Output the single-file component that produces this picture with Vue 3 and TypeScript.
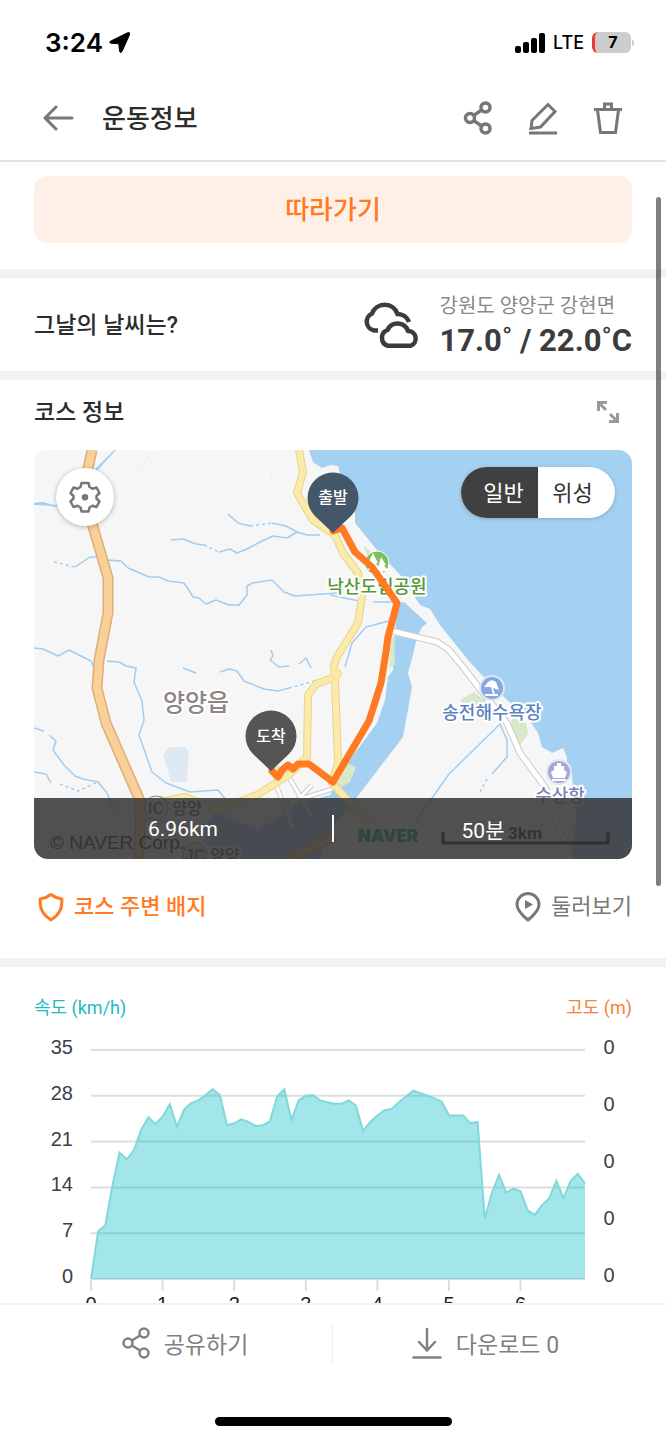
<script setup lang="ts">
import { ref } from 'vue'

const mapMode = ref<'normal' | 'satellite'>('normal')

const speeds: number[] = [
  0, 7.3, 8.2, 14.3, 19.3, 18.3, 19.7, 22.8, 24.7, 23.7,
  24.8, 26.7, 23.3, 25.9, 26.9, 27.3, 28.1, 29, 28.1, 23.5,
  23.8, 24.4, 24, 23.4, 23.5, 24.1, 27.9, 29, 24.3, 27.3,
  28, 28.1, 27.3, 27, 26.8, 26.8, 27.3, 26.5, 22.6, 24,
  25, 25.8, 26, 27, 27.9, 28.8, 28.4, 28, 27.6, 27.1,
  25, 25, 25, 23.8, 24, 9.2, 13.2, 15.9, 13.2, 13.8,
  13.4, 10.5, 9.8, 11.3, 12.3, 15, 12.4, 15, 16.1, 14.6,
]

const chart = { left: 57, right: 551, top: 22, bottom: 251 }
const perKm = (chart.right - chart.left) / 6.9
const xOf = (km: number): number => chart.left + km * perKm
const yOf = (v: number): number => chart.bottom - (v / 35) * (chart.bottom - chart.top)

const line = speeds.map((v, i) => `${xOf(i / 10).toFixed(1)},${yOf(v).toFixed(1)}`).join(' ')
const area = `${chart.left},${chart.bottom} ${line} ${chart.right},${chart.bottom}`
const speedTicks = [35, 28, 21, 14, 7, 0]
const altitudeTicks = [0, 1, 2, 3, 4]
const kmTicks = [0, 1, 2, 3, 4, 5, 6]
</script>

<template>
  <div class="app">
    <div class="status">
      <span class="time">3:24</span>
      <svg class="loc" width="22" height="22" viewBox="0 0 22 22" aria-hidden="true">
        <path d="M1.5 9.2 18.5 .8Q21.5 0 20.6 2.6L13 19.5Q11.5 21.8 10.6 19.2L9.8 11.8 2 11.2Q-.5 10.5 1.5 9.2Z" fill="#000" stroke="#000" stroke-width="1" stroke-linejoin="round" />
      </svg>
      <svg class="signal" width="30" height="20" viewBox="0 0 30 20" aria-hidden="true">
        <rect x="0" y="13" width="6" height="7" rx="2" />
        <rect x="8" y="9" width="6" height="11" rx="2" />
        <rect x="16" y="5" width="6" height="15" rx="2" />
        <rect x="24" y="0" width="6" height="20" rx="2" />
      </svg>
      <span class="net">LTE</span>
      <span class="battery">7</span>
      <i class="cap"></i>
    </div>

    <header class="header">
      <button class="icon-btn" aria-label="뒤로">
        <svg width="32" height="26" viewBox="0 0 32 26" fill="none" stroke="#777" stroke-width="3" stroke-linecap="round" stroke-linejoin="round">
          <path d="M30 13H3M14 2 3 13 14 24" />
        </svg>
      </button>
      <h1>운동정보</h1>
      <div class="actions">
        <button class="icon-btn" aria-label="공유">
          <svg width="30" height="34" viewBox="0 0 30 34" fill="none" stroke="#777" stroke-width="3.5">
            <circle cx="22.5" cy="6.5" r="4.5" /><circle cx="7" cy="17" r="4.5" /><circle cx="22.5" cy="27.5" r="4.5" />
            <path d="M10.8 14.4 18.7 9M10.8 19.6 18.7 25" />
          </svg>
        </button>
        <button class="icon-btn" aria-label="수정">
          <svg width="30" height="34" viewBox="0 0 30 34" fill="none" stroke="#777" stroke-width="3">
            <path d="M4 19.5 20 3.5 27 10.5 12.5 26 3 27.5ZM1 32H29" />
          </svg>
        </button>
        <button class="icon-btn" aria-label="삭제">
          <svg width="30" height="34" viewBox="0 0 30 34" fill="none" stroke="#777" stroke-width="3">
            <path d="M1 8.5H29M4.5 9 7.5 31.5H22.5L25.5 9M11.5 8V3H18.5V8" />
          </svg>
        </button>
      </div>
    </header>

    <main class="scroll">
      <section class="follow">
        <button class="follow-btn">따라가기</button>
      </section>

      <section class="weather">
        <h2>그날의 날씨는?</h2>
        <svg width="60" height="50" viewBox="0 0 60 50" fill="none" stroke="#3c3c3c" stroke-width="4.5" aria-hidden="true">
          <path d="M17 30.5H13A9 9 0 0 1 11 13.5 13.5 13.5 0 0 1 36.5 14 12 12 0 0 1 48 22" />
          <path d="M27 45.8A8.3 8.3 0 0 1 26.5 30 11 11 0 0 1 47 31 7.6 7.6 0 0 1 49.500 45.8Z" stroke-linejoin="round" />
        </svg>
        <div class="weather-text">
          <p class="place">강원도 양양군 강현면</p>
          <p class="temp">17.0˚ / 22.0˚C</p>
        </div>
      </section>

      <section class="course">
        <div class="course-head">
          <h2>코스 정보</h2>
          <button class="icon-btn" aria-label="지도 확대">
            <svg width="24" height="24" viewBox="0 0 24 24" fill="none" stroke="#999" stroke-width="3">
              <path d="M11 2.5H2.5V11M2.5 2.5 10 10M13 21.5H21.5V13M21.5 21.5 14 14" />
            </svg>
          </button>
        </div>

        <div class="map">
          <svg class="map-canvas" viewBox="0 0 598 409" role="img" aria-label="코스 지도">
            <rect width="598" height="409" fill="#f6f6f6" />
            <g transform="translate(-34 -450)" fill="none" stroke-linejoin="round">
              <path fill="#a4d1f2" d="M309 450 313 462 322 468 330 465 338 466 340 474 355 512 355 523 377 550 402 577 420 605 430 609 440 625 468 660 480 673 507 700 527 717 538 733 542 747 552 753 563 748 567 757 566 767 572 773 573 798 577 817 572 847 572 859H632V450Z" />
              <path fill="#a4d1f2" d="M404 602 427 623 422 627 417 637 413 655 408 673 412 687 403 737 357 797 334 825 320 859H240L205 845 208 820 217 812 258 830 300 803 330 795 352 757 377 723 385 700 388 677 393 670V657L396 620 398 603Z" />
              <path fill="#a4d1f2" d="M34 503 42 502 58 506 34 505ZM95 469 115 450 98 470Z" />
              <g stroke="#9fcdf3" stroke-width="1.5">
                <path d="M34 504 44 503 53 506 60 505M96 470 115 450M75 567 90 557 97 557M107 560 121 561 128 568 149 577 159 577 168 581 184 583 190 592 193 597 199 598 206 604 216 600 229 605 239 605 247 595V586L252 583 272 580 284 592 295 596 337 593M171 540 183 539 196 544 204 545M219 552 230 549 237 553 247 549 260 542 273 536 287 538 297 532 286 526 272 523M228 514 238 523 250 526M297 532 307 535 320 535M34 648 43 649 58 656 69 650 91 661 95 670M107 661 119 662 126 666 136 668 134 682 142 701 144 720 139 735 152 772 166 783 190 792 218 790 228 802" />
                <path d="M34 728 44 731M49 735 56 741 53 750 64 765 75 776 83 779 98 782 107 793 116 813M34 772 46 774 51 783M183 668 196 673M220 672 229 669 237 671 244 681 264 689 278 691 289 688M271 650 273 656 270 660 279 667 289 666M299 664 306 658 311 668M373 602 398 602M330 595 364 602M389 621 366 627 352 643 345 667M500 724 449 774 418 818 400 848M500 724 507 740V757L492 774" />
                <path d="M54 562 75 567M60 784 78 791 98 782M289 688 318 680M204 545 219 552M250 526 272 523M487 779 480 792" stroke-dasharray="3 3" />
              </g>
              <g stroke="#ccc" stroke-dasharray="1 5"><path d="M129 482 153 451M271 475 284 469" /></g>
              <path fill="#dfe9f2" d="M169 747 185 747 189 752 187 782H171L163 755Z" />
              <path fill="#d8e8c9" d="M460 700 474 692 484 700 492 705V715H472ZM513 718 526 723 528 734 520 745 510 726ZM344 762 356 767 350 782 338 789 330 785ZM363 545 377 557 370 563ZM270 768 279 765 282 778 275 784ZM389 668 395 665 394 636 391 638Z" />

              <path d="M276 784 292 827M290 779 313 818M312 785 290 808M282 805 332 789" stroke="#ccc" stroke-width="5" />
              <path d="M276 784 292 827M290 779 313 818M312 785 290 808M282 805 332 789" stroke="#fff" stroke-width="3" />
              <path d="M299 450 303 472 297 493 313 520 335 535 343 553 358 573 362 597 358 623 337 657 334 665 335 680 338 763 332 783 390 847M335 677 316 684 308 695 307 757 290 774 257 795 217 810 185 797 165 801 145 810" stroke="#e8d38c" stroke-width="8" />
              <path d="M299 450 303 472 297 493 313 520 335 535 343 553 358 573 362 597 358 623 337 657 334 665 335 680 338 763 332 783 390 847M335 677 316 684 308 695 307 757 290 774 257 795 217 810 185 797 165 801 145 810" stroke="#fceaab" stroke-width="6" />
              <circle cx="336" cy="674" r="5" stroke="#f8e3a0" stroke-width="3" fill="#fceaab" />
              <path d="M92 450 87 473 92 523 108 578V613L99 660 97 688 106 723 141 803 139 859M141 820 165 800M290 859 335 835" stroke="#e0ad76" stroke-width="11" />
              <path d="M92 450 87 473 92 523 108 578V613L99 660 97 688 106 723 141 803 139 859M141 820 165 800M290 859 335 835" stroke="#f9d198" stroke-width="8" />
              <path d="M392 631 437 642 448 649 463 667 483 693 507 723 520 753 545 787 571 859" stroke="#ccc" stroke-width="7" />
              <path d="M392 631 437 642 448 649 463 667 483 693 507 723 520 753 545 787 571 859" stroke="#fff" stroke-width="5" />

              <circle cx="377" cy="563" r="12" fill="#7bbf5c" stroke="#fff" stroke-width="1" />
              <path fill="#fff" d="M373 553 378 563H376L380 570H375V574H372V570H367L371 563H368ZM381 557 386 565H384L388 571H383V575H380V571H377Z" />
              <circle cx="492" cy="688" r="12" fill="#86a8dc" stroke="#dce8f8" stroke-width="2" />
              <path fill="#fff" d="M484 687 488 682 492 680 496 682 499 690 493 688 495 694H498V696H485V694H493L491 687Z" />
              <circle cx="559" cy="772" r="12" fill="#a3a9d3" stroke="#e4e6f5" stroke-width="2" />
              <path fill="#fff" d="M557 763H561V766H564V770L567 772 565 778H553L551 772 554 770V766H557ZM552 779H566V781H552Z" />

              <g class="map-text" text-anchor="middle" stroke="#fff" stroke-width="4" paint-order="stroke">
                <text x="377" y="593" font-size="18" fill="#509a37">낙산도립공원</text>
                <text x="492" y="719" font-size="18" fill="#5f83bd">송전해수욕장</text>
                <text x="560" y="802" font-size="18" fill="#7c81b5">수산항</text>
                <text x="196" y="711" font-size="24" fill="#8c8583">양양읍</text>
                <text x="187" y="814" font-size="16" fill="#444">양양</text>
                <text x="225" y="861" font-size="16" fill="#444">양양</text>
              </g>
              <g class="map-latin">
                <rect x="144" y="796" width="24" height="24" rx="12" fill="#eee" stroke="#888" />
                <text x="156" y="814" font-size="16" text-anchor="middle" fill="#666">IC</text>
                <rect x="183" y="843" width="24" height="24" rx="12" fill="#eee" stroke="#888" />
                <text x="195" y="861" font-size="16" text-anchor="middle" fill="#666">JC</text>
                <text class="plain" x="50" y="849" font-size="19" fill="#111">© NAVER Corp.</text>
                <rect x="350" y="824" width="76" height="26" rx="10" fill="#fff" />
                <text class="heavy" x="388" y="842" font-size="17" text-anchor="middle" fill="#03a850">NAVER</text>
                <text x="525" y="839" font-size="17" text-anchor="middle" fill="#111">3km</text>
                <path d="M443 832V843H608V832" stroke="#000" stroke-width="3" stroke-linejoin="miter" />
              </g>

              <path d="M333 531 342 528 355 552 372 567 397 603 388 637 386 652 381 683 369 721 333 782 309 764H298L293 769 288 765 282 770 278 777 272 771" stroke="#ff7a22" stroke-width="7" stroke-linecap="round" />
              <g class="pin" text-anchor="middle">
                <path fill="#43566a" d="M333 533 315 516A25.5 25.5 0 1 1 351 516Z" />
                <text x="333" y="503" font-size="16" fill="#fff">출발</text>
                <path fill="#555" d="M271 771 253 754A25.5 25.5 0 1 1 289 754Z" />
                <text x="271" y="742" font-size="16" fill="#fff">도착</text>
              </g>
            </g>
          </svg>

          <button class="gear" aria-label="지도 설정">
            <svg width="32" height="32" viewBox="0 0 32 32" fill="none" stroke="#777" stroke-width="2.5" stroke-linejoin="round">
              <path d="M12.5 2H19.5L20.5 6 23.5 7.8 27.5 6.5 30.5 12 27.5 15V17.5L30.5 20.5 27.5 26 23.5 24.7 20.5 26.5 19.5 30.5H12.5L11.5 26.5 8.5 24.7 4.5 26 1.5 20.5 4.5 17.5V15L1.5 12 4.5 6.5 8.5 7.8 11.5 6Z" />
              <circle cx="16" cy="16.2" r="2" fill="#777" />
            </svg>
          </button>

          <div class="toggle">
            <button :class="{ on: mapMode === 'normal' }" @click="mapMode = 'normal'">일반</button>
            <button :class="{ on: mapMode === 'satellite' }" @click="mapMode = 'satellite'">위성</button>
          </div>

          <div class="stats">
            <span>6.96km</span>
            <i></i>
            <span>50분</span>
          </div>
        </div>

        <div class="course-links">
          <button class="link-btn badge">
            <svg width="26" height="30" viewBox="0 0 26 30" fill="none" stroke="#ff7a22" stroke-width="3" stroke-linejoin="round">
              <path d="M13 2.5Q17.5 6 23.8 7 25 21 13 28 1 21 2.2 7 8.5 6 13 2.5Z" />
            </svg>
            코스 주변 배지
          </button>
          <button class="link-btn">
            <svg width="26" height="30" viewBox="0 0 26 30" fill="none" stroke="#777" stroke-width="3" stroke-linejoin="round">
              <path d="M13 28Q2 19 2 12.5A11 11 0 0 1 24 12.5Q24 19 13 28Z" />
              <path d="M10 8 18 12.5 10 17Z" fill="#777" stroke="none" />
            </svg>
            둘러보기
          </button>
        </div>
      </section>

      <section class="graph">
        <div class="graph-head">
          <span class="speed">속도 (km/h)</span>
          <span class="altitude">고도 (m)</span>
        </div>
        <svg class="plot" viewBox="0 0 598 290" role="img" aria-label="속도와 고도 그래프">
          <line v-for="t in speedTicks" :key="t" :x1="chart.left" :x2="chart.right" :y1="yOf(t)" :y2="yOf(t)" stroke="#dedede" stroke-width="2" />
          <line v-for="k in kmTicks" :key="k" :x1="xOf(k)" :x2="xOf(k)" y1="252" y2="263" stroke="#dedede" stroke-width="2" />
          <polygon :points="area" fill="#00b9c3" fill-opacity="0.36" />
          <polyline :points="line" fill="none" stroke="#7fd8dc" stroke-width="2" />
          <text v-for="t in speedTicks" :key="'s' + t" x="39" :y="yOf(t) + 4" text-anchor="end">{{ t }}</text>
          <text v-for="a in altitudeTicks" :key="'a' + a" x="575" :y="26 + a * 57" text-anchor="middle">0</text>
          <text v-for="k in kmTicks" :key="'k' + k" class="km" :x="xOf(k)" y="283" text-anchor="middle">{{ k }}</text>
        </svg>
      </section>
    </main>
    <i class="thumb"></i>

    <nav class="bottom">
      <div class="tabs">
        <button>
          <svg width="28" height="32" viewBox="0 0 28 32" fill="none" stroke="#808080" stroke-width="2.5">
            <circle cx="22" cy="6" r="4.5" /><circle cx="6" cy="16" r="4.5" /><circle cx="22" cy="26" r="4.5" />
            <path d="M10 13.5 18 8.5M10 18.5 18 23.5" />
          </svg>
          공유하기
        </button>
        <button>
          <svg width="30" height="32" viewBox="0 0 30 32" fill="none" stroke="#808080" stroke-width="2.5" stroke-linecap="round">
            <path d="M15 2V23M7 15 15 23.5 23 15M1.5 30.5H28.5" />
          </svg>
          다운로드 0
        </button>
      </div>
      <i class="home"></i>
    </nav>
  </div>
</template>

<style>
body {
  margin: 0;
}
</style>

<style scoped>
.app {
  position: relative;
  display: flex;
  flex-direction: column;
  height: 100vh;
  overflow: hidden;
  background: #fff;
  color: #2c2c2c;
  font-family: Roboto, "Noto Sans CJK KR", sans-serif;
}
h1,
h2,
p {
  margin: 0;
}
h2 {
  padding-top: 2px;
  font-size: 23px;
  font-weight: 500;
  line-height: 34px;
}
button {
  padding: 0;
  border: 0;
  background: none;
  color: inherit;
  font-family: inherit;
  cursor: pointer;
}
svg {
  display: block;
  flex: none;
}
.status {
  display: flex;
  align-items: center;
  box-sizing: border-box;
  height: 76px;
  padding: 9px 32px 0 45px;
  color: #000;
  font-family: Inter, sans-serif;
}
.time {
  font-size: 26px;
  font-weight: 600;
}
.loc {
  margin-left: 6px;
}
.signal {
  margin-left: auto;
}
.net {
  margin: 0 8px;
  font-size: 18px;
  font-weight: 500;
}
.battery {
  width: 36px;
  border-left: 3px solid #f0392f;
  border-radius: 6px;
  background: #ccc;
  font-size: 16px;
  font-weight: 700;
  line-height: 21px;
  text-align: center;
}
.cap {
  width: 2px;
  height: 6px;
  margin-left: 1px;
  border-radius: 0 2px 2px 0;
  background: #ccc;
}
.header {
  display: flex;
  align-items: center;
  box-sizing: border-box;
  height: 86px;
  padding: 0 43px 0 42px;
  border-bottom: 2px solid #e1e1e3;
}
h1 {
  padding-top: 2px;
  margin-left: 28px;
  font-size: 26px;
  font-weight: 500;
  line-height: 38px;
}
.actions {
  display: flex;
  gap: 35px;
  margin-left: auto;
}
.scroll {
  flex: 1;
  min-height: 0;
  overflow-y: auto;
  scrollbar-width: none;
}
.follow {
  padding: 14px 34px 26px;
  border-bottom: 9px solid #f1f2f4;
}
.follow-btn {
  display: block;
  width: 100%;
  height: 67px;
  padding-bottom: 4px;
  border-radius: 13px;
  background: #fff0e7;
  color: #ff7a22;
  font-size: 26px;
  font-weight: 500;
}
.weather {
  display: flex;
  align-items: center;
  height: 93px;
  padding: 0 34px;
  border-bottom: 9px solid #f1f2f4;
}
.weather h2 {
  margin-right: auto;
}
.weather-text {
  margin-left: 19px;
}
.place {
  color: #888;
  font-size: 20px;
  line-height: 32px;
}
.temp {
  color: #3c3c3c;
  font-size: 31px;
  font-weight: 700;
  line-height: 38px;
}
.course {
  padding: 0 34px;
  border-bottom: 9px solid #f1f2f4;
}
.course-head {
  display: flex;
  align-items: center;
  justify-content: space-between;
  height: 64px;
  padding: 0 12px 6px 0;
}
.map {
  position: relative;
  overflow: hidden;
  border-radius: 14px;
}
.map-canvas {
  width: 100%;
}
.map-text {
  font-family: "Noto Sans CJK KR", sans-serif;
  font-weight: 500;
}
.map-latin {
  font-family: "Liberation Sans", sans-serif;
  font-weight: 700;
}
.map-latin .plain {
  font-weight: 400;
}
.map-latin .heavy {
  font-family: Inter, sans-serif;
  font-weight: 900;
}
.pin {
  font-weight: 500;
}
.gear {
  position: absolute;
  top: 18px;
  left: 22px;
  display: grid;
  place-items: center;
  width: 58px;
  height: 58px;
  border-radius: 50%;
  background: #fff;
  box-shadow: 0 1px 5px rgba(0, 0, 0, 0.28);
}
.toggle {
  position: absolute;
  top: 17px;
  right: 17px;
  display: flex;
  overflow: hidden;
  border-radius: 26px;
  background: #fff;
  box-shadow: 0 1px 4px rgba(0, 0, 0, 0.2);
}
.toggle button {
  width: 77px;
  height: 51px;
  padding: 0 8px 4px 0;
  color: #333;
  font-size: 22px;
}
.toggle button:first-child {
  padding: 0 0 4px 8px;
}
.toggle .on {
  background: #404040;
  color: #fff;
}
.stats {
  position: absolute;
  right: 0;
  bottom: 0;
  left: 0;
  display: flex;
  align-items: center;
  height: 61px;
  background: rgba(55, 55, 55, 0.87);
  color: #fff;
  font-size: 21px;
}
.stats span {
  flex: 1;
  text-align: center;
}
.stats i {
  width: 2px;
  height: 27px;
  background: #fff;
}
.course-links {
  display: flex;
  align-items: center;
  justify-content: space-between;
  height: 95px;
  padding: 0 0 4px 4px;
}
.link-btn {
  display: flex;
  align-items: center;
  gap: 10px;
  color: #777;
  font-size: 22px;
  line-height: 32px;
}
.badge {
  color: #ff7a22;
  font-weight: 500;
}
.graph {
  padding: 0 34px;
}
.graph-head {
  display: flex;
  justify-content: space-between;
  padding: 27px 0 6px;
  font-size: 18px;
  line-height: 28px;
}
.speed {
  color: #1fb9c1;
}
.altitude {
  color: #f5813a;
}
.plot {
  width: 100%;
}
.plot text {
  fill: #3c3f44;
  font-family: "Liberation Sans", sans-serif;
  font-size: 20px;
}
.plot .km {
  fill: #222;
}
.thumb {
  position: absolute;
  top: 197px;
  right: 5px;
  width: 5px;
  height: 689px;
  border-radius: 3px;
  background: rgba(0, 0, 0, 0.5);
}
.bottom {
  display: flex;
  flex-direction: column;
  align-items: center;
  justify-content: space-between;
  box-sizing: border-box;
  height: 137px;
  padding-bottom: 14px;
  border-top: 2px solid #f0f0f3;
  background: #fff;
}
.tabs {
  display: grid;
  grid-template-columns: 1fr 1fr;
  width: 100%;
  margin-top: 18px;
}
.tabs button {
  display: flex;
  align-items: center;
  justify-content: center;
  gap: 14px;
  height: 41px;
  padding: 0 28px 2px 0;
  color: #808080;
  font-size: 23px;
}
.tabs button:first-child {
  padding: 0 0 2px 38px;
  border-right: 1px solid #ececec;
}
.home {
  width: 237px;
  height: 9px;
  border-radius: 5px;
  background: #000;
}
</style>
